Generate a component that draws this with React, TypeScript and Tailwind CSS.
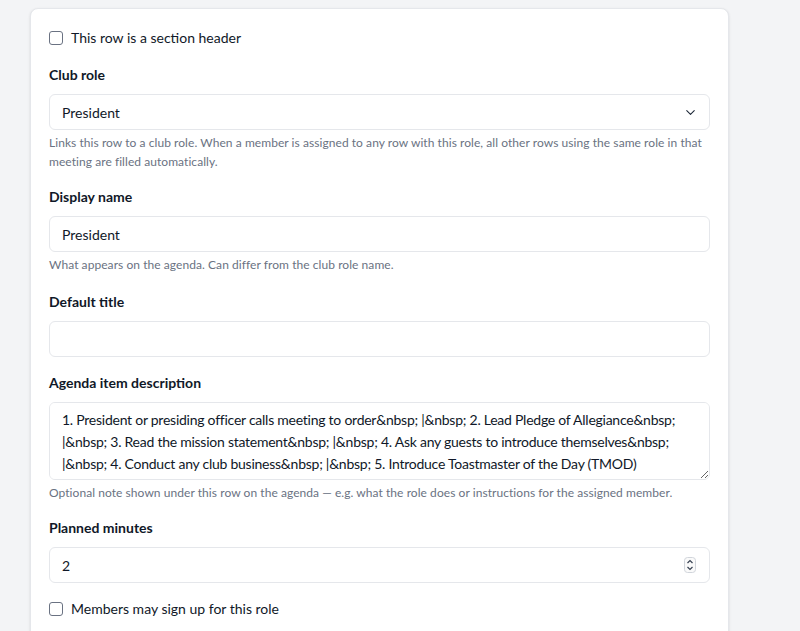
import { ChevronDown } from "lucide-react"

const font = { fontFamily: "Lato, 'Liberation Sans', sans-serif" }

interface FieldProps {
  label: string
  help?: string
  className?: string
  children: React.ReactNode
}

function Field({ label, help, className, children }: FieldProps) {
  return (
    <div className={"flex flex-col " + (className ?? "")}>
      <label className="text-[14px] leading-5 font-bold text-gray-900 mb-[9px]">{label}</label>
      {children}
      {help && <p className="mt-[3px] text-[12px] leading-[19px] tracking-[0.06px] text-gray-500">{help}</p>}
    </div>
  )
}

function Checkbox({ label }: { label: string }) {
  return (
    <label className="flex items-center gap-2 text-[14px] leading-5 text-gray-900">
      <input
        type="checkbox"
        className="appearance-none w-[14px] h-[14px] rounded-[3px] border border-gray-500 bg-white"
      />
      {label}
    </label>
  )
}

const inputCls =
  "w-full h-9 rounded-md border border-gray-200 bg-white px-3 text-[14px] text-gray-900 outline-none"

const description =
  "1. President or presiding officer calls meeting to order&nbsp; |&nbsp; 2. Lead Pledge of Allegiance&nbsp; |&nbsp; 3. Read the mission statement&nbsp; |&nbsp; 4. Ask any guests to introduce themselves&nbsp; |&nbsp; 4. Conduct any club business&nbsp; |&nbsp; 5. Introduce Toastmaster of the Day (TMOD)"

export default function App() {
  return (
    <div className="min-h-screen bg-gray-100 pt-2 pl-[30px] pr-[71px]" style={font}>
      <div className="rounded-lg border border-gray-200 bg-white px-[18px] pt-[19px] pb-6 shadow-sm flex flex-col gap-4">
        <div className="mb-px">
          <Checkbox label="This row is a section header" />
        </div>

        <Field
          label="Club role"
          help="Links this row to a club role. When a member is assigned to any row with this role, all other rows using the same role in that meeting are filled automatically."
        >
          <div className={inputCls + " flex items-center justify-between"}>
            <span>President</span>
            <ChevronDown size={15} strokeWidth={1.75} className="text-gray-800 -mr-px" />
          </div>
        </Field>

        <Field label="Display name" help="What appears on the agenda. Can differ from the club role name.">
          <input className={inputCls} defaultValue="President" style={font} />
        </Field>

        <Field label="Default title" className="mt-[2px]">
          <input className={inputCls} defaultValue="" style={font} />
        </Field>

        <Field
          label="Agenda item description"
          help="Optional note shown under this row on the agenda — e.g. what the role does or instructions for the assigned member."
        >
          <textarea
            className="w-full h-[78px] rounded-md border border-gray-200 bg-white px-3 py-[6px] text-[14px] leading-[22px] tracking-[-0.25px] text-gray-900 outline-none"
            defaultValue={description}
            style={font}
          />
        </Field>

        <Field label="Planned minutes">
          <div className="relative">
            <input className={inputCls} defaultValue="2" style={font} />
            <svg
              className="absolute right-[14px] top-1/2 -translate-y-1/2"
              width="12"
              height="16"
              viewBox="0 0 12 16"
              fill="none"
            >
              <rect x="0.5" y="0.5" width="11" height="15" rx="3" stroke="#d1d5db" fill="#fafafa" />
              <path d="M3.5 6 L6 3.5 L8.5 6" stroke="#374151" strokeWidth="1.2" />
              <path d="M3.5 10 L6 12.5 L8.5 10" stroke="#374151" strokeWidth="1.2" />
            </svg>
          </div>
        </Field>

        <Checkbox label="Members may sign up for this role" />
      </div>
    </div>
  )
}
